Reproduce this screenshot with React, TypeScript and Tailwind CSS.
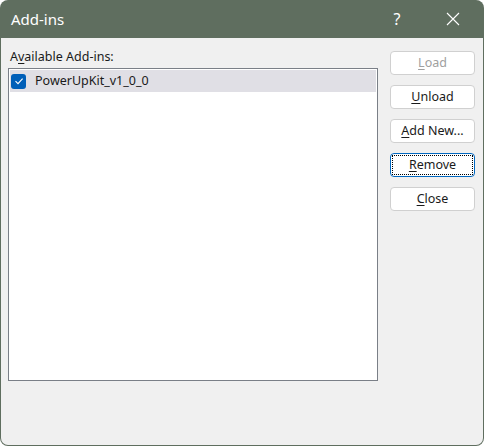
import React from "react";

function Btn({ label, u, rest, disabled, focus }: { label?: string; u: string; rest: string; disabled?: boolean; focus?: boolean }) {
  return (
    <div
      className={
        "h-[24px] w-[85px] rounded-[4px] bg-white flex items-center justify-center text-[12.5px] " +
        (focus ? "border border-[#0067c0] p-[1px]" : "border border-[#d0d0d0]") +
        (disabled ? " text-[#a0a0a0]" : " text-[#1a1a1a]")
      }
    >
      <div className={"w-full h-full flex items-center justify-center " + (focus ? "border border-dotted border-black" : "")}>
        <span>
          <span className="underline underline-offset-2">{u}</span>
          {rest}
        </span>
      </div>
    </div>
  );
}

export default function App() {
  return (
    <div className="w-[484px] h-[446px] bg-[#5f6e5f] rounded-[8px] overflow-hidden flex flex-col" style={{ fontFamily: '"Segoe UI", "Noto Sans", "Open Sans", sans-serif' }}>
      <div className="h-[38px] flex items-center text-white shrink-0">
        <div className="pl-[11px] text-[15px] flex-1">Add-ins</div>
        <div className="w-[46px] text-center text-[16px] mr-[10px]">?</div>
        <div className="w-[46px] flex justify-center mr-[8px]">
          <svg width="14" height="14" viewBox="0 0 14 14" stroke="white" strokeWidth="1.1" fill="none">
            <path d="M1 1 L13 13 M13 1 L1 13" />
          </svg>
        </div>
      </div>
      <div className="flex-1 mx-[1px] mb-[1px] bg-[#f0f0f0] rounded-b-[7px] flex pl-[7px] pr-[8px]">
        <div className="flex flex-col w-[370px]">
          <div className="mt-[8px] h-[21px] pl-[2px] text-[12.5px] text-[#1a1a1a] leading-[21px]">
            A<span className="underline underline-offset-2">v</span>ailable Add-ins:
          </div>
          <div className="mt-[1px] h-[313px] bg-white border border-[#7a7f87] p-[1px]">
            <div className="h-[22px] bg-[#e0dfe5] flex items-center pl-[1px]">
              <div className="w-[15px] h-[15px] rounded-[3px] bg-[#005fb8] flex items-center justify-center">
                <svg width="10" height="10" viewBox="0 0 10 10" fill="none" stroke="white" strokeWidth="1.1">
                  <path d="M1.5 5.2 L4 7.6 L8.6 2.6" />
                </svg>
              </div>
              <span className="ml-[9px] text-[12.5px] text-[#1a1a1a]">PowerUpKit_v1_0_0</span>
            </div>
          </div>
        </div>
        <div className="ml-[12px] mt-[13px] flex flex-col gap-[10px]">
          <Btn u="L" rest="oad" disabled />
          <Btn u="U" rest="nload" />
          <Btn u="A" rest="dd New..." />
          <Btn u="R" rest="emove" focus />
          <Btn u="C" rest="lose" />
        </div>
      </div>
    </div>
  );
}
